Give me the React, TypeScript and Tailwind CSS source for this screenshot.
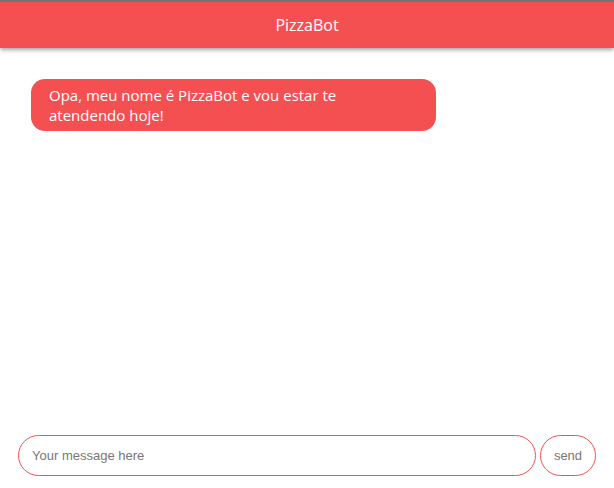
const App = () => {
  return (
    <div className="flex h-[488px] w-[614px] flex-col bg-white font-['Open_Sans',sans-serif]">
      <header className="flex h-[48px] shrink-0 items-center justify-center border-t-2 border-[#747474] bg-[#f45052] shadow-[0_2px_4px_rgba(0,0,0,0.35)]">
        <h1 className="text-[16px] text-white">PizzaBot</h1>
      </header>

      <main className="flex-1 px-[31px] pt-[31px]">
        <div className="w-[405px] rounded-[14px] bg-[#f45052] py-[6px] pl-[18px] pr-[40px] text-[15px] leading-[20px] text-white">
          Opa, meu nome é PizzaBot e vou estar te atendendo hoje!
        </div>
      </main>

      <form
        className="flex gap-[4px] px-[18px] pb-[12px]"
        onSubmit={(e) => e.preventDefault()}
      >
        <input
          type="text"
          placeholder="Your message here"
          className="h-[41px] flex-1 rounded-[21px] border border-[#f45052] px-[13px] font-['Liberation_Sans',sans-serif] text-[13px] text-gray-700 outline-none placeholder:text-[#777]"
        />
        <button
          type="submit"
          className="h-[41px] w-[56px] rounded-[21px] border border-[#f45052] font-['Liberation_Sans',sans-serif] text-[13px] text-[#777]"
        >
          send
        </button>
      </form>
    </div>
  )
}

export default App
